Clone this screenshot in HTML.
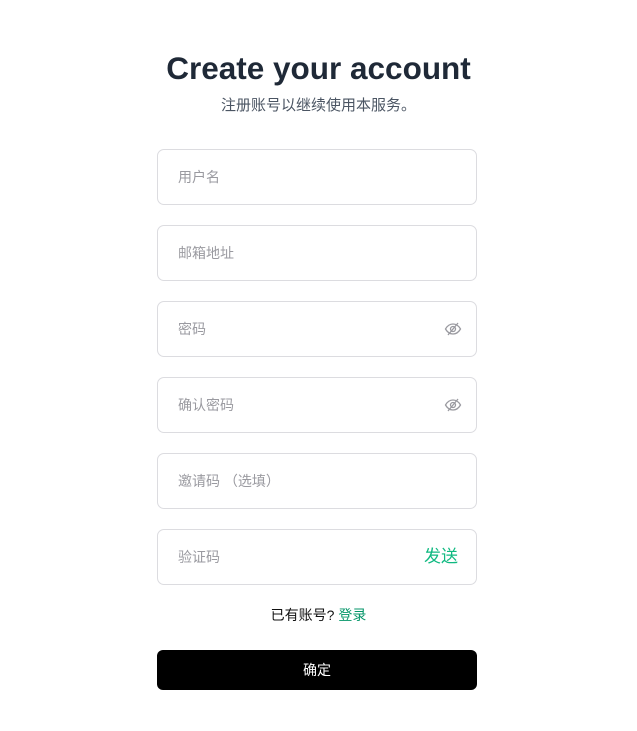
<!DOCTYPE html>
<html><head><meta charset="utf-8">
<style>
html,body{margin:0;padding:0;background:#fff;width:637px;height:731px;overflow:hidden;font-family:"Liberation Sans","Noto Sans CJK SC",sans-serif;}
h1{position:absolute;left:0;width:637px;top:48px;margin:0;text-align:center;font-size:31.5px;font-weight:bold;color:#1f2937;line-height:40px;font-family:"Liberation Sans",sans-serif;}
.sub{position:absolute;left:0;width:637px;top:96px;text-align:center;font-size:15px;color:#4b5563;line-height:20px}
.f{position:absolute;left:157px;width:318px;height:54px;border:1px solid #dcdce0;border-radius:7px;box-sizing:content-box}
.f span{position:absolute;left:20px;top:17px;font-size:14px;color:#9a9aa0;line-height:20px}
.f svg{position:absolute;right:14px;top:19px}
.send{position:absolute;right:18px!important;left:auto!important;top:15px!important;color:#10b981!important;font-size:17px!important;line-height:24px!important}
.login{position:absolute;left:0;width:637px;top:605px;text-align:center;font-size:14px;color:#111;line-height:20px}
.login a{color:#059669;text-decoration:none}
.btn{position:absolute;left:157px;top:650px;width:320px;height:40px;background:#000;border-radius:6px;color:#fff;font-size:14px;text-align:center;line-height:40px}
</style></head><body>
<h1>Create your account</h1>
<div class="sub">注册账号以继续使用本服务。</div>
<div class="f" style="top:149px"><span>用户名</span></div>
<div class="f" style="top:225px"><span>邮箱地址</span></div>
<div class="f" style="top:301px"><span>密码</span>
<svg width="18" height="16" viewBox="0 0 18 16" fill="none" stroke="#9a9aa0" stroke-width="1.3"><path d="M1.5 8C3.5 4.5 6 3 9 3s5.5 1.5 7.5 5c-2 3.5-4.5 5-7.5 5S3.5 11.5 1.5 8z"/><circle cx="9" cy="8" r="2.5"/><path d="M4 14L14 2"/></svg></div>
<div class="f" style="top:377px"><span>确认密码</span>
<svg width="18" height="16" viewBox="0 0 18 16" fill="none" stroke="#9a9aa0" stroke-width="1.3"><path d="M1.5 8C3.5 4.5 6 3 9 3s5.5 1.5 7.5 5c-2 3.5-4.5 5-7.5 5S3.5 11.5 1.5 8z"/><circle cx="9" cy="8" r="2.5"/><path d="M4 14L14 2"/></svg></div>
<div class="f" style="top:453px"><span>邀请码 （选填）</span></div>
<div class="f" style="top:529px"><span>验证码</span><span class="send">发送</span></div>
<div class="login">已有账号? <a>登录</a></div>
<div class="btn">确定</div>
</body></html>
